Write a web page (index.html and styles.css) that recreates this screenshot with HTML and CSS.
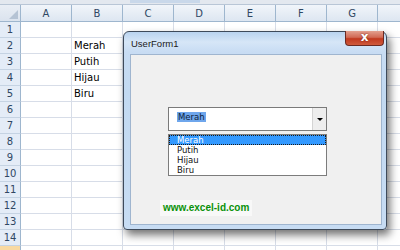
FILE: index.html
```html
<!DOCTYPE html>
<html>
<head>
<meta charset="utf-8">
<link rel="stylesheet" href="styles.css">
</head>
<body>
<div class="sheet">
  <div class="topbar"><div class="fx"></div></div>
  <div class="grid">
    <div class="corner"><span class="tri"></span></div><div class="ch">A</div><div class="ch">B</div><div class="ch">C</div><div class="ch">D</div><div class="ch">E</div><div class="ch">F</div><div class="ch">G</div><div class="ch"></div>
    <div class="rh">1</div><div class="c"></div><div class="c"></div><div class="c"></div><div class="c"></div><div class="c"></div><div class="c"></div><div class="c"></div><div class="c"></div>
    <div class="rh">2</div><div class="c"></div><div class="c">Merah</div><div class="c"></div><div class="c"></div><div class="c"></div><div class="c"></div><div class="c"></div><div class="c"></div>
    <div class="rh">3</div><div class="c"></div><div class="c">Putih</div><div class="c"></div><div class="c"></div><div class="c"></div><div class="c"></div><div class="c"></div><div class="c"></div>
    <div class="rh">4</div><div class="c"></div><div class="c">Hijau</div><div class="c"></div><div class="c"></div><div class="c"></div><div class="c"></div><div class="c"></div><div class="c"></div>
    <div class="rh">5</div><div class="c"></div><div class="c">Biru</div><div class="c"></div><div class="c"></div><div class="c"></div><div class="c"></div><div class="c"></div><div class="c"></div>
    <div class="rh">6</div><div class="c"></div><div class="c"></div><div class="c"></div><div class="c"></div><div class="c"></div><div class="c"></div><div class="c"></div><div class="c"></div>
    <div class="rh">7</div><div class="c"></div><div class="c"></div><div class="c"></div><div class="c"></div><div class="c"></div><div class="c"></div><div class="c"></div><div class="c"></div>
    <div class="rh">8</div><div class="c"></div><div class="c"></div><div class="c"></div><div class="c"></div><div class="c"></div><div class="c"></div><div class="c"></div><div class="c"></div>
    <div class="rh">9</div><div class="c"></div><div class="c"></div><div class="c"></div><div class="c"></div><div class="c"></div><div class="c"></div><div class="c"></div><div class="c"></div>
    <div class="rh">10</div><div class="c"></div><div class="c"></div><div class="c"></div><div class="c"></div><div class="c"></div><div class="c"></div><div class="c"></div><div class="c"></div>
    <div class="rh">11</div><div class="c"></div><div class="c"></div><div class="c"></div><div class="c"></div><div class="c"></div><div class="c"></div><div class="c"></div><div class="c"></div>
    <div class="rh">12</div><div class="c"></div><div class="c"></div><div class="c"></div><div class="c"></div><div class="c"></div><div class="c"></div><div class="c"></div><div class="c"></div>
    <div class="rh">13</div><div class="c"></div><div class="c"></div><div class="c"></div><div class="c"></div><div class="c"></div><div class="c"></div><div class="c"></div><div class="c"></div>
    <div class="rh">14</div><div class="c"></div><div class="c"></div><div class="c"></div><div class="c"></div><div class="c"></div><div class="c"></div><div class="c"></div><div class="c"></div>
    <div class="rh active"></div><div class="c"></div><div class="c"></div><div class="c"></div><div class="c"></div><div class="c"></div><div class="c"></div><div class="c"></div><div class="c"></div>
  </div>

  <div class="dialog">
    <div class="titlebar"><span class="title">UserForm1</span></div>
    <div class="close">x</div>
    <div class="client">
      <div class="combo">
        <div class="combo-text"><span class="sel">Merah</span></div>
        <div class="combo-btn"><span class="arrow"></span></div>
      </div>
      <div class="listbox">
        <div class="item selected">Merah</div>
        <div class="item">Putih</div>
        <div class="item">Hijau</div>
        <div class="item">Biru</div>
      </div>
      <div class="watermark">www.excel-id.com</div>
    </div>
  </div>
</div>
</body>
</html>
```
FILE: styles.css
```css
html, body {
  margin: 0;
  padding: 0;
  background: #ffffff;
  overflow: hidden;
}
.sheet {
  position: relative;
  width: 400px;
  height: 250px;
  overflow: hidden;
  font-family: "DejaVu Sans", sans-serif;
}
.topbar {
  height: 5px;
  box-sizing: border-box;
  background: #e3e8ef;
  border-bottom: 1px solid #b9c6d6;
  position: relative;
}
.fx {
  position: absolute;
  left: 130px;
  width: 70px;
  top: 0;
  height: 3px;
  background: #c9d8ea;
}
.grid {
  display: grid;
  grid-template-columns: 21px repeat(8, 51px);
  grid-template-rows: 17px repeat(15, 16px);
}
.corner, .ch, .rh {
  box-sizing: border-box;
  border-right: 1px solid #9eb6ce;
  border-bottom: 1px solid #9eb6ce;
  color: #2f4763;
  font-size: 10px;
  display: flex;
  align-items: center;
  justify-content: center;
}
.corner {
  background: linear-gradient(#e9eef5, #dbe3ee);
  position: relative;
}
.tri {
  position: absolute;
  right: 2px;
  bottom: 2px;
  width: 0;
  height: 0;
  border-left: 9px solid transparent;
  border-bottom: 9px solid #b5c3d4;
}
.ch {
  background: linear-gradient(#f1f5fa, #dde6f1);
  padding-top: 1px;
}
.rh {
  background: #e4ecf7;
  border-bottom-color: #c5d3e3;
}
.rh.active {
  background: #f8d9a2;
}
.c {
  box-sizing: border-box;
  border-right: 1px solid #d7dde8;
  border-bottom: 1px solid #d7dde8;
  font-size: 10px;
  color: #000;
  padding-left: 2px;
  line-height: 15px;
  white-space: nowrap;
}

.dialog {
  position: absolute;
  left: 123px;
  top: 31px;
  width: 264px;
  height: 199px;
  box-sizing: border-box;
  border: 1px solid #3e4a5a;
  border-radius: 6px 6px 4px 4px;
  background: linear-gradient(to bottom, #b9d3ef 0, #d6e6f7 10px, #c8dcf3 20px, #c2d9f1 60px, #c7dcf3 100%);
  padding: 0 4px 4px 6px;
  display: flex;
  flex-direction: column;
  box-shadow: 3px 5px 9px rgba(0, 0, 0, 0.55);
}
.titlebar {
  height: 22px;
  display: flex;
  align-items: center;
  padding-left: 1px;
}
.title {
  font-family: "Liberation Sans", sans-serif;
  font-size: 9.5px;
  color: #1b1b1b;
}
.close {
  position: absolute;
  top: -1px;
  right: 2px;
  width: 39px;
  height: 15px;
  box-sizing: border-box;
  border: 1px solid #6b2a22;
  border-top: none;
  border-radius: 0 0 4px 4px;
  background: linear-gradient(#e3a08f 0, #d16a55 45%, #c1391f 55%, #cf5a3c 100%);
  color: #ffffff;
  font-family: "DejaVu Sans", sans-serif;
  font-weight: bold;
  font-size: 12px;
  line-height: 12px;
  text-align: center;
  text-shadow: 0 0 2px #6b1a10;
}
.client {
  flex: 1;
  box-sizing: border-box;
  border: 1px solid #9fb5cf;
  background: #f0f0f0;
  padding: 52px 0 0 37px;
  display: flex;
  flex-direction: column;
  align-items: flex-start;
}
.combo {
  width: 159px;
  height: 24px;
  box-sizing: border-box;
  border: 1px solid #7a7a7a;
  background: #ffffff;
  display: flex;
}
.combo-text {
  flex: 1;
  padding: 4px 0 0 8px;
  font-family: "DejaVu Sans", sans-serif;
  font-size: 8.5px;
  line-height: 10px;
}
.sel {
  background: #6ea6ec;
  color: #0f1f3d;
  display: inline-block;
  padding: 0 1px;
}
.combo-btn {
  width: 13px;
  background: #eeeeee;
  border-left: 1px solid #d4d4d4;
  display: flex;
  align-items: center;
  justify-content: center;
}
.arrow {
  width: 0;
  height: 0;
  border-left: 3px solid transparent;
  border-right: 3px solid transparent;
  border-top: 3px solid #000;
  margin-top: 1px;
}
.listbox {
  margin-top: 3px;
  width: 159px;
  height: 42px;
  box-sizing: border-box;
  border: 1px solid #7c7c7c;
  background: #ffffff;
  padding-top: 0;
}
.item {
  height: 10px;
  line-height: 10px;
  box-sizing: border-box;
  padding-left: 8px;
  font-family: "DejaVu Sans", sans-serif;
  font-size: 8.5px;
  color: #111;
}
.item.selected {
  background: #3399ff;
  color: #ffffff;
  outline: 1px dotted #1a1a1a;
  outline-offset: -1px;
}
.watermark {
  margin: 24px 0 0 -8px;
  padding: 2px 3px;
  background: #f8f8f8;
  color: #0a920a;
  font-family: "Liberation Sans", sans-serif;
  font-weight: bold;
  font-size: 10px;
  line-height: 12px;
}
```
